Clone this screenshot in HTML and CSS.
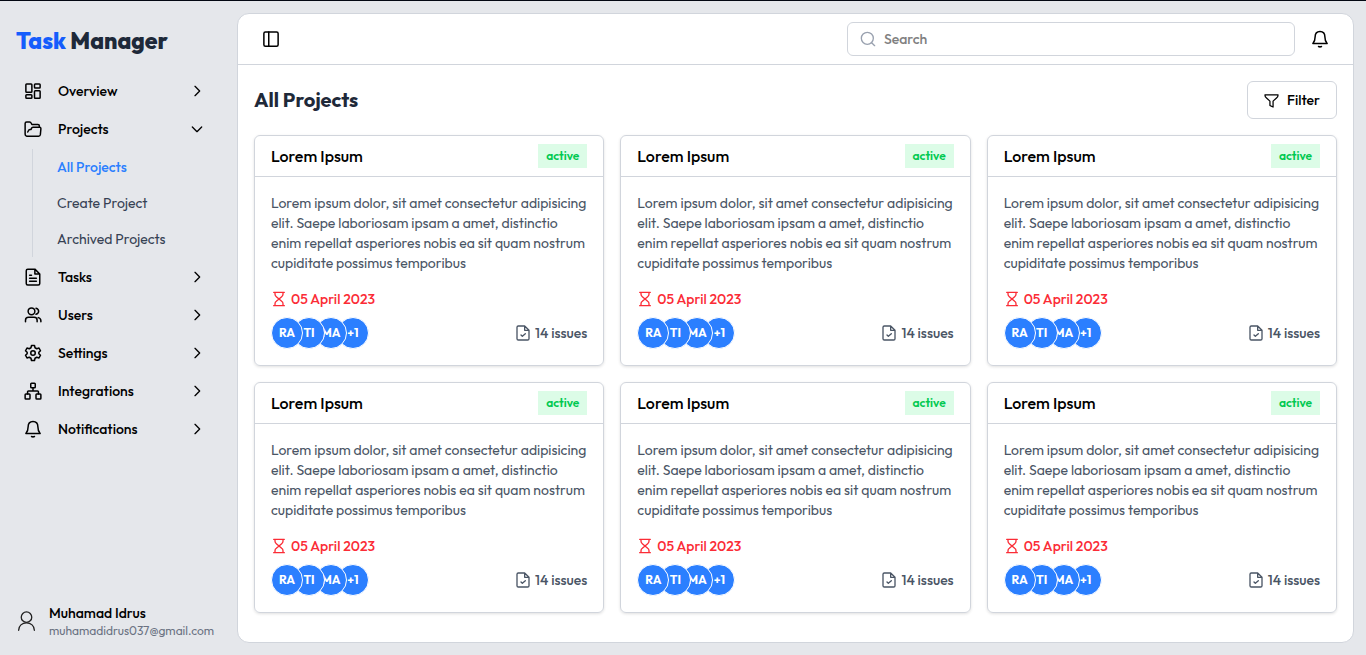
FILE: index.html
```html
<!DOCTYPE html>
<html lang="en">
<head>
<meta charset="utf-8">
<meta name="viewport" content="width=device-width, initial-scale=1">
<title>Task Manager</title>
<link rel="stylesheet" href="styles.css">
</head>
<body>
<svg class="sprite" aria-hidden="true">
  <symbol id="dashboard" viewBox="0 0 24 24"><rect x="2.5" y="2.5" width="8" height="11" rx="1"/><rect x="14" y="2.5" width="7.5" height="5.5" rx="1"/><rect x="14" y="11.5" width="7.5" height="10" rx="1"/><rect x="2.5" y="17" width="8" height="4.500" rx="1"/></symbol>
  <symbol id="folder" viewBox="0 0 24 24"><path d="M3.500 21.500Q1.500 21 1.500 19V4.500Q1.500 2.500 3.500 2.500H7.500Q9 2.500 9.500 4L10.500 6H18.500Q20.500 6 20.500 8V9.500M3.500 21.500H19.500Q21.500 21.500 21.800 19.500L22.500 12Q22.700 9.500 20.500 9.500H12Q10.500 9.500 10 11L9.500 12.500H8Q6.500 12.500 6 14L5 16"/></symbol>
  <symbol id="file" viewBox="0 0 24 24"><path d="M14.500 1.500H5Q3 1.500 3 3.500V20.500Q3 22.500 5 22.500H19Q21 22.500 21 20.500V8ZM14.500 1.500V8H21M7.500 9.500H10M7.500 13.500H16.500M7.500 17.500H16.500"/></symbol>
  <symbol id="users" viewBox="0 0 24 24"><circle cx="10" cy="7" r="4.500"/><path d="M2 21V19Q2 15 6 15H13.500Q17.500 15 17.500 19V21M16 3Q19.500 4 19.500 7T16 11M19 15.500Q22.500 16.500 22.500 19.500V21"/></symbol>
  <symbol id="gear" viewBox="0 0 24 24"><circle cx="12" cy="12" r="3"/><path d="M10 2H14L14.700 5L17 6.300L20 5.400L22 9L19.800 11V13L22 15L20 18.600L17 17.700L14.700 19L14 22H10L9.300 19L7 17.700L4 18.600L2 15L4.200 13V11L2 9L4 5.400L7 6.300L9.300 5Z"/></symbol>
  <symbol id="network" viewBox="0 0 24 24"><rect x="9" y="1.500" width="6" height="6" rx="1"/><rect x="1.500" y="16" width="6.500" height="6.500" rx="1"/><rect x="16" y="16" width="6.500" height="6.500" rx="1"/><path d="M12 7.500V12M4.750 16V13Q4.750 12 6 12H18Q19.250 12 19.250 13V16"/></symbol>
  <symbol id="bell" viewBox="0 0 24 24"><path d="M10 22Q12 23 14 22M2.500 18Q5.500 15 5.500 9Q5.500 2 12 2T18.500 9Q18.500 15 21.500 18Z"/></symbol>
  <symbol id="right" viewBox="0 0 24 24"><path d="m9 5 7 7-7 7"/></symbol>
  <symbol id="down" viewBox="0 0 24 24"><path d="m5 9 7 7 7-7"/></symbol>
  <symbol id="person" viewBox="0 0 24 24"><circle cx="12" cy="7" r="6"/><path d="M3 22C3 17 7 13.500 12 13.500S21 17 21 22"/></symbol>
  <symbol id="panel" viewBox="0 0 24 24"><rect x="2.500" y="2.500" width="19" height="19" rx="2"/><path d="M9 2.500V21.500"/></symbol>
  <symbol id="search" viewBox="0 0 24 24"><circle cx="11" cy="11" r="9"/><path d="m17.500 17.500 4.500 4.500"/></symbol>
  <symbol id="funnel" viewBox="0 0 24 24"><path d="M1.500 3H22.500Q22.500 6 20 8L14.500 13V22.500L9.500 20V13L4 8Q1.500 6 1.500 3Z"/></symbol>
  <symbol id="hourglass" viewBox="0 0 24 24"><path d="M4 2H20M4 22H20M6 2V5Q6 7 8 8.500L12 12L8 15.500Q6 17 6 19V22M18 2V5Q18 7 16 8.500L12 12L16 15.500Q18 17 18 19V22"/></symbol>
  <symbol id="check-file" viewBox="0 0 24 24"><path d="M14.500 1.500H5Q3 1.500 3 3.500V20.500Q3 22.500 5 22.500H19Q21 22.500 21 20.500V8ZM14.500 1.500V8H21M9 15 11 17 15.500 13"/></symbol>
</svg>
<div class="app">
  <aside class="sidebar">
    <h1 class="brand"><span class="brand-accent">Task</span> Manager</h1>
    <nav class="nav" aria-label="Main">
      <button class="nav-item"><svg class="icon"><use href="#dashboard"/></svg><span class="nav-label">Overview</span><svg class="chevron"><use href="#right"/></svg></button>
      <button class="nav-item" aria-expanded="true"><svg class="icon"><use href="#folder"/></svg><span class="nav-label">Projects</span><svg class="chevron"><use href="#down"/></svg></button>
      <div class="subnav">
        <a class="sub-link current" href="#all" aria-current="page">All Projects</a>
        <a class="sub-link" href="#create">Create Project</a>
        <a class="sub-link" href="#archived">Archived Projects</a>
      </div>
      <button class="nav-item"><svg class="icon"><use href="#file"/></svg><span class="nav-label">Tasks</span><svg class="chevron"><use href="#right"/></svg></button>
      <button class="nav-item"><svg class="icon"><use href="#users"/></svg><span class="nav-label">Users</span><svg class="chevron"><use href="#right"/></svg></button>
      <button class="nav-item"><svg class="icon"><use href="#gear"/></svg><span class="nav-label">Settings</span><svg class="chevron"><use href="#right"/></svg></button>
      <button class="nav-item"><svg class="icon"><use href="#network"/></svg><span class="nav-label">Integrations</span><svg class="chevron"><use href="#right"/></svg></button>
      <button class="nav-item"><svg class="icon"><use href="#bell"/></svg><span class="nav-label">Notifications</span><svg class="chevron"><use href="#right"/></svg></button>
    </nav>
    <div class="account">
      <svg class="account-icon"><use href="#person"/></svg>
      <div><div class="account-name">Muhamad Idrus</div><div class="account-email">muhamadidrus037@gmail.com</div></div>
    </div>
  </aside>
  <main class="panel">
    <header class="topbar">
      <button class="icon-button" aria-label="Toggle sidebar"><svg class="icon"><use href="#panel"/></svg></button>
      <div class="topbar-tools">
        <label class="search"><svg class="search-icon" aria-label="Search"><use href="#search"/></svg><input class="search-input" type="text" placeholder="Search" aria-label="Search"></label>
        <button class="icon-button" aria-label="Notifications"><svg class="icon"><use href="#bell"/></svg></button>
      </div>
    </header>
    <section class="content">
      <div class="heading">
        <h2 class="title">All Projects</h2>
        <button class="filter"><svg class="filter-icon"><use href="#funnel"/></svg>Filter</button>
      </div>
      <div class="grid">
        <article class="card">
          <header class="card-head"><h3 class="card-title">Lorem Ipsum</h3><span class="badge">active</span></header>
          <div class="card-body">
            <p class="summary">Lorem ipsum dolor, sit amet consectetur adipisicing elit. Saepe laboriosam ipsam a amet, distinctio enim repellat asperiores nobis ea sit quam nostrum cupiditate possimus temporibus</p>
            <div class="due"><svg class="small-icon"><use href="#hourglass"/></svg>05 April 2023</div>
            <div class="card-foot"><div class="avatars"><span class="avatar">RA</span><span class="avatar">TI</span><span class="avatar">MA</span><span class="avatar">+1</span></div><div class="issues"><svg class="small-icon"><use href="#check-file"/></svg>14 issues</div></div>
          </div>
        </article>
        <article class="card">
          <header class="card-head"><h3 class="card-title">Lorem Ipsum</h3><span class="badge">active</span></header>
          <div class="card-body">
            <p class="summary">Lorem ipsum dolor, sit amet consectetur adipisicing elit. Saepe laboriosam ipsam a amet, distinctio enim repellat asperiores nobis ea sit quam nostrum cupiditate possimus temporibus</p>
            <div class="due"><svg class="small-icon"><use href="#hourglass"/></svg>05 April 2023</div>
            <div class="card-foot"><div class="avatars"><span class="avatar">RA</span><span class="avatar">TI</span><span class="avatar">MA</span><span class="avatar">+1</span></div><div class="issues"><svg class="small-icon"><use href="#check-file"/></svg>14 issues</div></div>
          </div>
        </article>
        <article class="card">
          <header class="card-head"><h3 class="card-title">Lorem Ipsum</h3><span class="badge">active</span></header>
          <div class="card-body">
            <p class="summary">Lorem ipsum dolor, sit amet consectetur adipisicing elit. Saepe laboriosam ipsam a amet, distinctio enim repellat asperiores nobis ea sit quam nostrum cupiditate possimus temporibus</p>
            <div class="due"><svg class="small-icon"><use href="#hourglass"/></svg>05 April 2023</div>
            <div class="card-foot"><div class="avatars"><span class="avatar">RA</span><span class="avatar">TI</span><span class="avatar">MA</span><span class="avatar">+1</span></div><div class="issues"><svg class="small-icon"><use href="#check-file"/></svg>14 issues</div></div>
          </div>
        </article>
        <article class="card">
          <header class="card-head"><h3 class="card-title">Lorem Ipsum</h3><span class="badge">active</span></header>
          <div class="card-body">
            <p class="summary">Lorem ipsum dolor, sit amet consectetur adipisicing elit. Saepe laboriosam ipsam a amet, distinctio enim repellat asperiores nobis ea sit quam nostrum cupiditate possimus temporibus</p>
            <div class="due"><svg class="small-icon"><use href="#hourglass"/></svg>05 April 2023</div>
            <div class="card-foot"><div class="avatars"><span class="avatar">RA</span><span class="avatar">TI</span><span class="avatar">MA</span><span class="avatar">+1</span></div><div class="issues"><svg class="small-icon"><use href="#check-file"/></svg>14 issues</div></div>
          </div>
        </article>
        <article class="card">
          <header class="card-head"><h3 class="card-title">Lorem Ipsum</h3><span class="badge">active</span></header>
          <div class="card-body">
            <p class="summary">Lorem ipsum dolor, sit amet consectetur adipisicing elit. Saepe laboriosam ipsam a amet, distinctio enim repellat asperiores nobis ea sit quam nostrum cupiditate possimus temporibus</p>
            <div class="due"><svg class="small-icon"><use href="#hourglass"/></svg>05 April 2023</div>
            <div class="card-foot"><div class="avatars"><span class="avatar">RA</span><span class="avatar">TI</span><span class="avatar">MA</span><span class="avatar">+1</span></div><div class="issues"><svg class="small-icon"><use href="#check-file"/></svg>14 issues</div></div>
          </div>
        </article>
        <article class="card">
          <header class="card-head"><h3 class="card-title">Lorem Ipsum</h3><span class="badge">active</span></header>
          <div class="card-body">
            <p class="summary">Lorem ipsum dolor, sit amet consectetur adipisicing elit. Saepe laboriosam ipsam a amet, distinctio enim repellat asperiores nobis ea sit quam nostrum cupiditate possimus temporibus</p>
            <div class="due"><svg class="small-icon"><use href="#hourglass"/></svg>05 April 2023</div>
            <div class="card-foot"><div class="avatars"><span class="avatar">RA</span><span class="avatar">TI</span><span class="avatar">MA</span><span class="avatar">+1</span></div><div class="issues"><svg class="small-icon"><use href="#check-file"/></svg>14 issues</div></div>
          </div>
        </article>
      </div>
    </section>
  </main>
</div>
</body>
</html>
```
FILE: styles.css
```css
* { box-sizing: border-box; }
body, h1, h2, h3, p { margin: 0; }
body {
  font: 500 14px/20px Outfit, Lato, sans-serif;
  color: #000;
  background: #e5e7eb;
}
button { font: inherit; color: inherit; background: none; border: 0; padding: 0; cursor: pointer; }
svg { fill: none; stroke: currentColor; stroke-width: 2; stroke-linecap: round; stroke-linejoin: round; flex: none; }
.sprite { display: none; }
.icon { width: 18px; height: 18px; }
.small-icon, .chevron { width: 16px; height: 16px; }

.app { display: flex; min-height: 100vh; border-top: 1px solid #030712; }

.sidebar { width: 237px; flex: none; display: flex; flex-direction: column; padding: 24px 16px 16px; }
.brand { font-size: 23px; line-height: 32px; font-weight: 800; color: #1e2939; }
.brand-accent { color: #155dfc; }
.nav { display: flex; flex-direction: column; padding-top: 15px; }
.nav-item { display: flex; align-items: center; gap: 16px; height: 38px; padding: 0 16px 0 8px; text-align: left; }
.nav-label { flex: 1; }
.subnav { display: flex; flex-direction: column; margin: 1px 0 1px 16px; border-left: 1px solid #d1d5dc; }
.sub-link { padding: 8px 24px; font-weight: 400; color: #364153; text-decoration: none; }
.sub-link.current { font-weight: 500; color: #2b7fff; }
.account { display: flex; align-items: center; gap: 12px; margin-top: auto; }
.account-icon { width: 21px; height: 21px; color: #222; stroke-width: 1.5; }
.account-name { line-height: 20px; }
.account-email { font-size: 12px; line-height: 16px; font-weight: 400; color: #6a7282; }

.panel { flex: 1; min-width: 0; margin: 12px 12px 12px 0; background: #fff; border: 1px solid #d1d5dc; border-radius: 12px; }
.topbar { display: flex; align-items: center; justify-content: space-between; gap: 16px; padding: 8px 24px; border-bottom: 1px solid #d1d5dc; }
.topbar-tools { display: flex; align-items: center; gap: 16px; }
.icon-button { display: flex; }
.search { display: flex; align-items: center; gap: 8px; width: 448px; height: 34px; padding: 0 12px; border: 1px solid #d1d5dc; border-radius: 6px; }
.search-icon { width: 16px; height: 16px; color: #99a1af; }
.search-input { flex: 1; min-width: 0; padding: 0; border: 0; outline: 0; font: inherit; background: none; }
.search-input::placeholder { color: #808080; opacity: 1; }

.content { padding: 16px; }
.heading { display: flex; justify-content: space-between; align-items: center; margin-bottom: 16px; }
.title { font-size: 20px; line-height: 28px; font-weight: 700; color: #1e2939; }
.filter { display: flex; align-items: center; gap: 8px; height: 38px; padding: 0 16px; border: 1px solid #d1d5dc; border-radius: 6px; }
.filter-icon { width: 15px; height: 15px; }
.grid { display: grid; grid-template-columns: repeat(3, minmax(0, 1fr)); gap: 16px; }
.card { border: 1px solid #d1d5dc; border-radius: 6px; box-shadow: 0 1px 3px rgb(0 0 0 / 12%); }
.card-head { display: flex; justify-content: space-between; align-items: center; padding: 8px 16px; border-bottom: 1px solid #d1d5dc; }
.card-title { font-size: 16px; line-height: 24px; font-weight: 500; }
.badge { padding: 4px 8px; font-size: 12px; line-height: 16px; font-weight: 600; color: #00c950; background: #dcfce7; }
.card-body { padding: 16px; }
.summary { font-weight: 400; color: #4a5565; }
.due { display: flex; align-items: center; gap: 4px; margin: 16px 0 8px; color: #fb2c36; }
.card-foot { display: flex; justify-content: space-between; align-items: center; }
.avatars { display: flex; isolation: isolate; }
.avatar { position: relative; display: flex; align-items: center; justify-content: center; width: 32px; height: 32px; border: 1px solid #fff; border-radius: 50%; background: #2b7fff; color: #fff; font-size: 12px; font-weight: 700; }
.avatar + .avatar { margin-left: -10px; }
.avatar:nth-child(1) { z-index: 4; }
.avatar:nth-child(2) { z-index: 3; }
.avatar:nth-child(3) { z-index: 2; }
.issues { display: flex; align-items: center; gap: 4px; color: #4a5565; }
```
